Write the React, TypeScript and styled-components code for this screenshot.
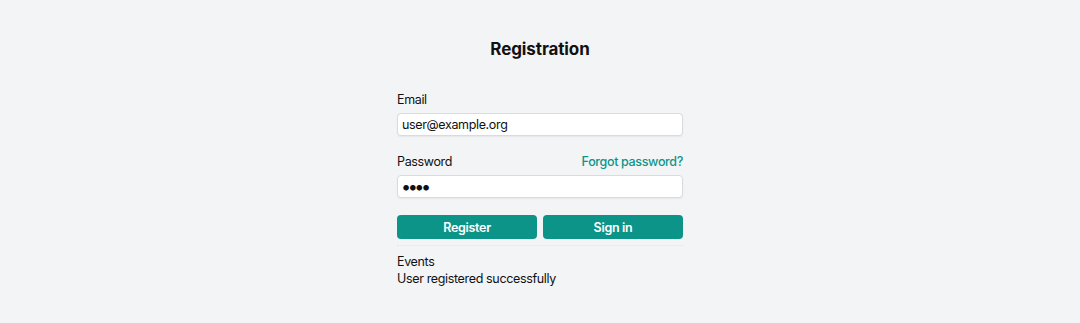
import React from "react";
import styled, { createGlobalStyle } from "styled-components";

const Global = createGlobalStyle`
  html, body { margin: 0; padding: 0; background: #f3f4f6; }
  body { font-family: Inter, "Liberation Sans", Arial, sans-serif; color: #111; }
`;

const Page = styled.div`
  display: flex;
  justify-content: center;
  padding-top: 39px;
  min-height: 323px;
  box-sizing: border-box;
`;

const Form = styled.div`
  width: 286px;
  display: flex;
  flex-direction: column;
  font-size: 12.5px;
  letter-spacing: -0.35px;
`;

const Title = styled.h1`
  margin: 0 0 32px;
  font-size: 17px;
  font-weight: 700;
  text-align: center;
  line-height: 20px;
  letter-spacing: -0.1px;
`;

const Field = styled.div`
  display: flex;
  flex-direction: column;
  margin-bottom: 17px;
`;

const LabelRow = styled.div`
  display: flex;
  justify-content: space-between;
  align-items: baseline;
  padding-top: 1px;
  margin-bottom: 5px;
  line-height: 16px;
`;

const Label = styled.label``;

const Link = styled.a`
  font-weight: 500;
  color: #0d9488;
  text-decoration: none;
`;

const Input = styled.input`
  box-sizing: border-box;
  height: 23px;
  width: 100%;
  border: 1px solid #d9dbe0;
  border-radius: 4px;
  background: #fff;
  box-shadow: 0 1px 2px rgba(0, 0, 0, 0.06);
  padding: 0 4px;
  font-family: inherit;
  font-size: 12.5px;
  letter-spacing: -0.35px;
  color: #111;
  outline: none;
  &[type="password"] {
    font-size: 18px;
    letter-spacing: -3.5px;
    padding-left: 3px;
  }
`;

const Buttons = styled.div`
  display: grid;
  grid-template-columns: 1fr 1fr;
  gap: 6px;
  padding-bottom: 6px;
  border-bottom: 1px dotted #e3e5e9;
`;

const Button = styled.button`
  height: 24px;
  border: none;
  border-radius: 4px;
  background: #0d9488;
  color: #fff;
  font-family: inherit;
  font-size: 12.5px;
  letter-spacing: -0.3px;
  font-weight: 600;
  cursor: pointer;
`;

const Events = styled.div`
  margin-top: 7px;
  line-height: 17px;
`;

const EventsTitle = styled.div``;
const EventLine = styled.div``;

export default function App() {
  return (
    <>
      <Global />
      <Page>
        <Form>
          <Title>Registration</Title>
          <Field>
            <LabelRow>
              <Label>Email</Label>
            </LabelRow>
            <Input type="text" defaultValue="user@example.org" />
          </Field>
          <Field>
            <LabelRow>
              <Label>Password</Label>
              <Link href="#">Forgot password?</Link>
            </LabelRow>
            <Input type="password" defaultValue="abcd" />
          </Field>
          <Buttons>
            <Button>Register</Button>
            <Button>Sign in</Button>
          </Buttons>
          <Events>
            <EventsTitle>Events</EventsTitle>
            <EventLine>User registered successfully</EventLine>
          </Events>
        </Form>
      </Page>
    </>
  );
}
